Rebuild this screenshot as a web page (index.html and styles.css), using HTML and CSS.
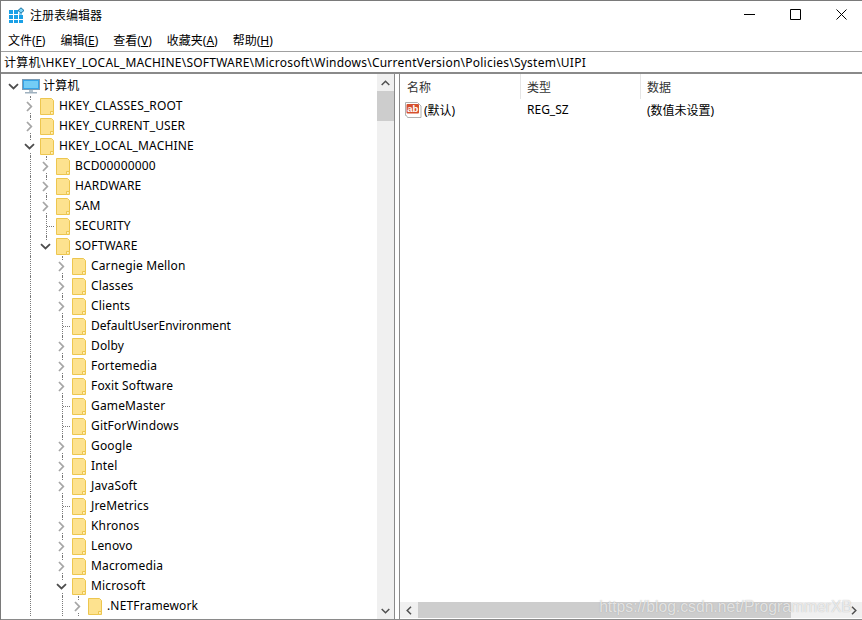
FILE: index.html
```html
<!DOCTYPE html>
<html lang="zh-CN">
<head>
<meta charset="utf-8">
<title>注册表编辑器</title>
<link rel="stylesheet" href="styles.css">
</head>
<body>
<svg class="defs" width="0" height="0" aria-hidden="true">
  <symbol id="fold" viewBox="0 0 14 17"><path d="M0.500 0.500h11l2 2v14h-13z" fill="#fde28f" stroke="#edc64f"/><path d="M10.500 16.500v-3h3" fill="#fff2c4" stroke="#edc64f"/></symbol>
  <symbol id="chev-r" viewBox="0 0 11 11"><rect width="11" height="11" fill="#fff"/><path d="M3 1l4.300 4.500L3 10" stroke="#a6a6a6" stroke-width="1.800" fill="none"/></symbol>
  <symbol id="chev-d" viewBox="0 0 11 11"><rect width="11" height="11" fill="#fff"/><path d="M1 3.200l4.500 4.300L10 3.200" stroke="#4d4d4d" stroke-width="1.800" fill="none"/></symbol>
</svg>
<div class="window">
  <header class="titlebar">
    <svg class="appicon" width="16" height="16" viewBox="0 0 16 16">
      <path fill="#19a0e6" d="M0 3h4v4H0zM5 3h4v4H5zM10 6.500h3V7.500h-3zM0 8h4v4H0zM5 8h4v4H5zM10 8h4v4h-4zM0 13h4v3H0zM5 13h4v3H5zM10 13h4v3h-4z"/>
      <path fill="#7fd4f7" stroke="#14709f" d="M12 0.800l3 2.700-3 2.700-3-2.700z"/>
    </svg>
    <span class="title">注册表编辑器</span>
    <div class="winbtns">
      <svg width="11" height="11" viewBox="0 0 11 11"><path d="M0 5.500h11" stroke="#000" fill="none"/></svg>
      <svg width="11" height="11" viewBox="0 0 11 11"><path d="M0.500 0.500h10v10h-10z" stroke="#000" fill="none"/></svg>
      <svg width="11" height="11" viewBox="0 0 11 11"><path d="M0.500 0.500l10 10M10.500 0.500l-10 10" stroke="#000" fill="none"/></svg>
    </div>
  </header>
  <nav class="menubar">
    <span class="menu">文件(<u>F</u>)</span>
    <span class="menu">编辑(<u>E</u>)</span>
    <span class="menu">查看(<u>V</u>)</span>
    <span class="menu">收藏夹(<u>A</u>)</span>
    <span class="menu">帮助(<u>H</u>)</span>
  </nav>
  <div class="address">计算机\HKEY_LOCAL_MACHINE\SOFTWARE\Microsoft\Windows\CurrentVersion\Policies\System\UIPI</div>
  <main class="panes">
    <section class="treepane">
      <div class="tree">
        <div class="row">
          <span class="first"></span>
          <span class="twist"><svg class="chev"><use href="#chev-d"/></svg></span>
          <svg class="pc" width="18" height="15" viewBox="0 0 18 15">
            <rect x="0.500" y="0.500" width="17" height="10" fill="#35a4e8" stroke="#7d9cb5"/>
            <rect x="2" y="2" width="14" height="7" fill="#74cdf6"/>
            <rect x="7" y="11" width="4" height="2" fill="#b4c2cc"/>
            <rect x="3" y="13" width="12" height="1.500" fill="#9fb1bf"/>
          </svg>
          <span class="label">计算机</span>
        </div>
        <div class="row"><span class="first"></span><span class="guide"></span><span class="twist line"><svg class="chev"><use href="#chev-r"/></svg></span><svg class="fold"><use href="#fold"/></svg><span class="label">HKEY_CLASSES_ROOT</span></div>
        <div class="row"><span class="first"></span><span class="guide"></span><span class="twist line"><svg class="chev"><use href="#chev-r"/></svg></span><svg class="fold"><use href="#fold"/></svg><span class="label">HKEY_CURRENT_USER</span></div>
        <div class="row"><span class="first"></span><span class="guide"></span><span class="twist line"><svg class="chev"><use href="#chev-d"/></svg></span><svg class="fold"><use href="#fold"/></svg><span class="label">HKEY_LOCAL_MACHINE</span></div>

        <div class="row"><span class="first"></span><span class="guide"></span><span class="guide on"></span><span class="twist line"><svg class="chev"><use href="#chev-r"/></svg></span><svg class="fold"><use href="#fold"/></svg><span class="label">BCD00000000</span></div>
        <div class="row"><span class="first"></span><span class="guide"></span><span class="guide on"></span><span class="twist line"><svg class="chev"><use href="#chev-r"/></svg></span><svg class="fold"><use href="#fold"/></svg><span class="label">HARDWARE</span></div>
        <div class="row"><span class="first"></span><span class="guide"></span><span class="guide on"></span><span class="twist line"><svg class="chev"><use href="#chev-r"/></svg></span><svg class="fold"><use href="#fold"/></svg><span class="label">SAM</span></div>
        <div class="row"><span class="first"></span><span class="guide"></span><span class="guide on"></span><span class="twist line leaf"></span><svg class="fold"><use href="#fold"/></svg><span class="label">SECURITY</span></div>
        <div class="row"><span class="first"></span><span class="guide"></span><span class="guide on"></span><span class="twist upper"><svg class="chev"><use href="#chev-d"/></svg></span><svg class="fold"><use href="#fold"/></svg><span class="label">SOFTWARE</span></div>

        <div class="row"><span class="first"></span><span class="guide"></span><span class="guide on"></span><span class="guide"></span><span class="twist line"><svg class="chev"><use href="#chev-r"/></svg></span><svg class="fold"><use href="#fold"/></svg><span class="label">Carnegie Mellon</span></div>
        <div class="row"><span class="first"></span><span class="guide"></span><span class="guide on"></span><span class="guide"></span><span class="twist line"><svg class="chev"><use href="#chev-r"/></svg></span><svg class="fold"><use href="#fold"/></svg><span class="label">Classes</span></div>
        <div class="row"><span class="first"></span><span class="guide"></span><span class="guide on"></span><span class="guide"></span><span class="twist line"><svg class="chev"><use href="#chev-r"/></svg></span><svg class="fold"><use href="#fold"/></svg><span class="label">Clients</span></div>
        <div class="row"><span class="first"></span><span class="guide"></span><span class="guide on"></span><span class="guide"></span><span class="twist line leaf"></span><svg class="fold"><use href="#fold"/></svg><span class="label tight">DefaultUserEnvironment</span></div>
        <div class="row"><span class="first"></span><span class="guide"></span><span class="guide on"></span><span class="guide"></span><span class="twist line"><svg class="chev"><use href="#chev-r"/></svg></span><svg class="fold"><use href="#fold"/></svg><span class="label">Dolby</span></div>
        <div class="row"><span class="first"></span><span class="guide"></span><span class="guide on"></span><span class="guide"></span><span class="twist line"><svg class="chev"><use href="#chev-r"/></svg></span><svg class="fold"><use href="#fold"/></svg><span class="label">Fortemedia</span></div>
        <div class="row"><span class="first"></span><span class="guide"></span><span class="guide on"></span><span class="guide"></span><span class="twist line"><svg class="chev"><use href="#chev-r"/></svg></span><svg class="fold"><use href="#fold"/></svg><span class="label">Foxit Software</span></div>
        <div class="row"><span class="first"></span><span class="guide"></span><span class="guide on"></span><span class="guide"></span><span class="twist line leaf"></span><svg class="fold"><use href="#fold"/></svg><span class="label">GameMaster</span></div>
        <div class="row"><span class="first"></span><span class="guide"></span><span class="guide on"></span><span class="guide"></span><span class="twist line leaf"></span><svg class="fold"><use href="#fold"/></svg><span class="label">GitForWindows</span></div>
        <div class="row"><span class="first"></span><span class="guide"></span><span class="guide on"></span><span class="guide"></span><span class="twist line"><svg class="chev"><use href="#chev-r"/></svg></span><svg class="fold"><use href="#fold"/></svg><span class="label">Google</span></div>
        <div class="row"><span class="first"></span><span class="guide"></span><span class="guide on"></span><span class="guide"></span><span class="twist line"><svg class="chev"><use href="#chev-r"/></svg></span><svg class="fold"><use href="#fold"/></svg><span class="label">Intel</span></div>
        <div class="row"><span class="first"></span><span class="guide"></span><span class="guide on"></span><span class="guide"></span><span class="twist line"><svg class="chev"><use href="#chev-r"/></svg></span><svg class="fold"><use href="#fold"/></svg><span class="label">JavaSoft</span></div>
        <div class="row"><span class="first"></span><span class="guide"></span><span class="guide on"></span><span class="guide"></span><span class="twist line leaf"></span><svg class="fold"><use href="#fold"/></svg><span class="label">JreMetrics</span></div>
        <div class="row"><span class="first"></span><span class="guide"></span><span class="guide on"></span><span class="guide"></span><span class="twist line"><svg class="chev"><use href="#chev-r"/></svg></span><svg class="fold"><use href="#fold"/></svg><span class="label">Khronos</span></div>
        <div class="row"><span class="first"></span><span class="guide"></span><span class="guide on"></span><span class="guide"></span><span class="twist line"><svg class="chev"><use href="#chev-r"/></svg></span><svg class="fold"><use href="#fold"/></svg><span class="label">Lenovo</span></div>
        <div class="row"><span class="first"></span><span class="guide"></span><span class="guide on"></span><span class="guide"></span><span class="twist line"><svg class="chev"><use href="#chev-r"/></svg></span><svg class="fold"><use href="#fold"/></svg><span class="label">Macromedia</span></div>
        <div class="row"><span class="first"></span><span class="guide"></span><span class="guide on"></span><span class="guide"></span><span class="twist line"><svg class="chev"><use href="#chev-d"/></svg></span><svg class="fold"><use href="#fold"/></svg><span class="label">Microsoft</span></div>
        <div class="row"><span class="first"></span><span class="guide"></span><span class="guide on"></span><span class="guide"></span><span class="guide on"></span><span class="twist line"><svg class="chev"><use href="#chev-r"/></svg></span><svg class="fold"><use href="#fold"/></svg><span class="label">.NETFramework</span></div>
      </div>
      <div class="vscroll">
        <span class="sbtn"><svg width="9" height="6" viewBox="0 0 9 6"><path d="M0.700 5l3.800-3.800L8.300 5" stroke="#505050" stroke-width="1.500" fill="none"/></svg></span>
        <span class="vtrack"><span class="vthumb"></span></span>
        <span class="sbtn"><svg width="9" height="6" viewBox="0 0 9 6"><path d="M0.700 1l3.800 3.800L8.300 1" stroke="#505050" stroke-width="1.500" fill="none"/></svg></span>
      </div>
    </section>
    <div class="splitter"></div>
    <section class="listpane">
      <div class="listhead">
        <span class="col c1">名称</span>
        <span class="col c2">类型</span>
        <span class="col c3">数据</span>
      </div>
      <div class="listrow">
        <span class="c1 namecell">
          <svg class="abicon" width="17" height="16" viewBox="0 0 17 16">
            <path d="M0.500 0.500h12l3.500 3.500v11.500H2.500l-1-2h-1z" fill="#fff" stroke="#b0b0b0"/>
            <rect x="1.500" y="2" width="12.500" height="9.500" rx="1" fill="#d5502f"/>
            <text x="2.300" y="9.600" class="abtext">ab</text>
          </svg>
          <span>(默认)</span>
        </span>
        <span class="c2">REG_SZ</span>
        <span class="c3">(数值未设置)</span>
      </div>
      <div class="listfill"></div>
      <div class="hscroll">
        <span class="hbtn first-btn"><svg width="6" height="9" viewBox="0 0 6 9"><path d="M5 0.700L1.200 4.500 5 8.300" stroke="#505050" stroke-width="1.500" fill="none"/></svg></span>
        <span class="htrack"><span class="hthumb"></span></span>
        <span class="hbtn"><svg width="6" height="9" viewBox="0 0 6 9"><path d="M1 0.700l3.800 3.800L1 8.300" stroke="#505050" stroke-width="1.500" fill="none"/></svg></span>
      </div>
      <div class="watermark">https://blog.csdn.net/ProgrammerXB</div>
    </section>
  </main>
</div>
</body>
</html>
```
FILE: styles.css
```css
* { box-sizing: border-box; }
html, body { margin: 0; height: 100%; background: #fff; overflow: hidden; }
body { font-family: "Noto Sans", "Noto Sans CJK SC", sans-serif; font-size: 12px; color: #000; }
.defs { position: absolute; }
.window { width: 862px; height: 620px; display: flex; flex-direction: column; border-top: 1px solid #7a7a7a; border-left: 1px solid #7a7a7a; }
.titlebar { height: 30px; display: flex; align-items: center; padding: 0 0 3px 8px; flex: none; }
.appicon { flex: none; }
.title { margin-left: 5px; font-size: 12px; }
.winbtns { margin-left: auto; display: flex; align-items: center; gap: 35px; padding-right: 15px; }
.menubar { height: 20px; display: flex; align-items: center; padding: 0 0 2px 7px; gap: 15px; flex: none; font-size: 12px; }
.address { height: 23px; flex: none; border-top: 1px solid #a0a0a0; border-bottom: 2px solid #8a8a8a; padding: 2px 0 0 3px; line-height: 18px; letter-spacing: 0.235px; white-space: nowrap; overflow: hidden; }
.panes { flex: 1; display: flex; min-height: 0; border-bottom: 1px solid #8a8a8a; }
.treepane { width: 394px; flex: none; display: flex; border-right: 1px solid #8a8a8a; min-height: 0; }
.tree { width: 376px; flex: none; overflow: hidden; padding-top: 2px; }
.row { height: 20px; display: flex; align-items: center; white-space: nowrap; }
.label { padding-bottom: 2px; letter-spacing: 0.150px; }
.label.tight { letter-spacing: 0; }
.first { width: 5px; flex: none; }
.guide { width: 16px; height: 20px; flex: none; position: relative; }
.guide.on::before { content: ""; position: absolute; left: 8px; top: 0; bottom: 0; border-left: 1px dotted #7a7a7a; }
.twist { width: 16px; height: 20px; flex: none; display: flex; align-items: center; justify-content: center; position: relative; }
.twist.line::before { content: ""; position: absolute; left: 8px; top: 0; bottom: 0; border-left: 1px dotted #7a7a7a; }
.twist.upper::before { content: ""; position: absolute; left: 8px; top: 0; height: 10px; border-left: 1px dotted #7a7a7a; }
.twist.leaf::after { content: ""; position: absolute; left: 9px; top: 10px; width: 7px; border-top: 1px dotted #7a7a7a; }
.chev { width: 11px; height: 11px; position: relative; margin-left: -1px; }
.fold { width: 14px; height: 17px; flex: none; margin: 0 5px 0 2px; }
.pc { flex: none; margin-right: 3px; }
.vscroll { width: 17px; flex: none; display: flex; flex-direction: column; background: #f0f0f0; }
.sbtn { height: 17px; flex: none; display: flex; align-items: center; justify-content: center; }
.vtrack { flex: 1; }
.vthumb { display: block; height: 30px; background: #cdcdcd; }
.splitter { width: 4px; flex: none; }
.listpane { flex: 1; display: flex; flex-direction: column; border-left: 1px solid #8a8a8a; min-width: 0; position: relative; }
.listhead { height: 25px; display: flex; flex: none; align-items: center; color: #333; padding-left: 1px; }
.col { height: 25px; line-height: 25px; border-right: 1px solid #e5e5e5; padding: 1px 0 0 6px; flex: none; }
.c1 { width: 120px; flex: none; }
.c2 { width: 120px; flex: none; }
.col.c3 { border-right: none; }
.listrow { height: 20px; display: flex; align-items: center; flex: none; padding: 1px 0 0 7px; }
.listrow .c1 { width: 120px; }
.namecell { display: flex; align-items: center; gap: 2px; margin-left: -2px; margin-right: 2px; }
.abtext { font: bold 9.500px "Liberation Sans", sans-serif; fill: #fff; }
.listfill { flex: 1; }
.hscroll { height: 16px; margin-bottom: 1px; flex: none; display: flex; background: #f0f0f0; }
.hbtn { width: 17px; flex: none; display: flex; align-items: center; justify-content: center; }
.first-btn { width: 18px; }
.htrack { flex: 1; }
.hthumb { display: block; width: 373px; height: 100%; background: #cdcdcd; }
.watermark { position: absolute; right: 10px; bottom: 3px; font-family: "Liberation Sans", sans-serif; font-size: 15.700px; color: rgba(255,255,255,0.7); text-shadow: 0 0 1px rgba(120,120,120,0.55); }
```
